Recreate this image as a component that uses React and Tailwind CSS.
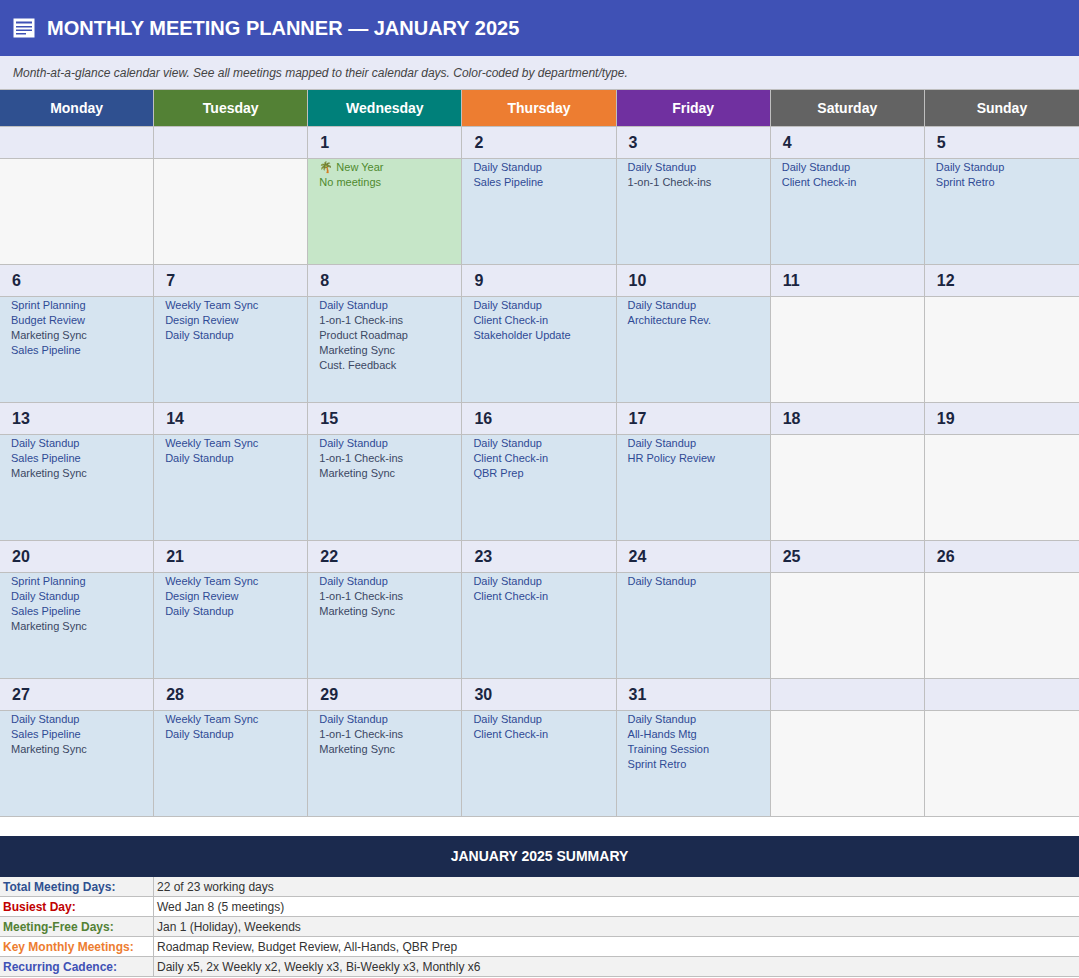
import React from "react";

const days = [
  ["Monday", "bg-[#2f5090]"],
  ["Tuesday", "bg-[#538135]"],
  ["Wednesday", "bg-[#00807a]"],
  ["Thursday", "bg-[#ed7d31]"],
  ["Friday", "bg-[#7030a0]"],
  ["Saturday", "bg-[#636363]"],
  ["Sunday", "bg-[#636363]"],
];

const gray = new Set(["1-on-1 Check-ins", "Product Roadmap", "Marketing Sync", "Cust. Feedback"]);

const M = {
  2: ["Daily Standup", "Sales Pipeline"],
  3: ["Daily Standup", "1-on-1 Check-ins"],
  4: ["Daily Standup", "Client Check-in"],
  5: ["Daily Standup", "Sprint Retro"],
  6: ["Sprint Planning", "Budget Review", "Marketing Sync", "Sales Pipeline"],
  7: ["Weekly Team Sync", "Design Review", "Daily Standup"],
  8: ["Daily Standup", "1-on-1 Check-ins", "Product Roadmap", "Marketing Sync", "Cust. Feedback"],
  9: ["Daily Standup", "Client Check-in", "Stakeholder Update"],
  10: ["Daily Standup", "Architecture Rev."],
  13: ["Daily Standup", "Sales Pipeline", "Marketing Sync"],
  14: ["Weekly Team Sync", "Daily Standup"],
  15: ["Daily Standup", "1-on-1 Check-ins", "Marketing Sync"],
  16: ["Daily Standup", "Client Check-in", "QBR Prep"],
  17: ["Daily Standup", "HR Policy Review"],
  20: ["Sprint Planning", "Daily Standup", "Sales Pipeline", "Marketing Sync"],
  21: ["Weekly Team Sync", "Design Review", "Daily Standup"],
  22: ["Daily Standup", "1-on-1 Check-ins", "Marketing Sync"],
  23: ["Daily Standup", "Client Check-in"],
  24: ["Daily Standup"],
  27: ["Daily Standup", "Sales Pipeline", "Marketing Sync"],
  28: ["Weekly Team Sync", "Daily Standup"],
  29: ["Daily Standup", "1-on-1 Check-ins", "Marketing Sync"],
  30: ["Daily Standup", "Client Check-in"],
  31: ["Daily Standup", "All-Hands Mtg", "Training Session", "Sprint Retro"],
};

const cells = [];
for (let i = 0; i < 35; i++) {
  const d = i - 1;
  cells.push(d >= 1 && d <= 31 ? d : null);
}

function Cell({ d, col }) {
  const last = col === 6;
  const br = last ? "" : "border-r";
  const items = d ? M[d] : null;
  let body = "bg-[#f7f7f7]";
  if (d === 1) body = "bg-[#c6e6c8]";
  else if (items) body = "bg-[#d6e4f0]";
  return (
    <div className="flex flex-col">
      <div className={`h-[32px] bg-[#e8eaf6] border-b border-[#bfbfbf] ${br} flex items-center px-[12px] text-[16px] font-bold text-[#1a2540]`}>
        {d || ""}
      </div>
      <div className={`h-[106px] ${body} border-b border-[#bfbfbf] ${br} px-[11px] pt-[1px] text-[11px] leading-[15px]`}>
        {d === 1 && (
          <div className="text-[#4f8a2e]">
            <div>🌴 New Year</div>
            <div>No meetings</div>
          </div>
        )}
        {items &&
          items.map((m) => (
            <div key={m} className={gray.has(m) ? "text-[#3b4763]" : "text-[#2f4a95]"}>
              {m}
            </div>
          ))}
      </div>
    </div>
  );
}

const summary = [
  ["Total Meeting Days:", "22 of 23 working days", "text-[#2f5090]", "bg-[#f2f2f2]"],
  ["Busiest Day:", "Wed Jan 8 (5 meetings)", "text-[#c00000]", "bg-white"],
  ["Meeting-Free Days:", "Jan 1 (Holiday), Weekends", "text-[#538135]", "bg-[#f2f2f2]"],
  ["Key Monthly Meetings:", "Roadmap Review, Budget Review, All-Hands, QBR Prep", "text-[#ed7d31]", "bg-white"],
  ["Recurring Cadence:", "Daily x5, 2x Weekly x2, Weekly x3, Bi-Weekly x3, Monthly x6", "text-[#3f51b5]", "bg-[#f2f2f2]"],
];

export default function App() {
  return (
    <div className="w-[1079px] h-[978px] bg-white overflow-hidden" style={{ fontFamily: '"Liberation Sans", Arial, sans-serif' }}>
      <div className="h-[56px] bg-[#3f51b5] flex items-center px-[13px] gap-[12px]">
        <svg width="22" height="20" viewBox="0 0 22 20">
          <rect x="0.5" y="0.5" width="21" height="19" fill="white" />
          <rect x="3" y="3.5" width="16" height="2" fill="#3f51b5" />
          <rect x="3" y="8" width="16" height="1.5" fill="#3f51b5" />
          <rect x="3" y="11.5" width="16" height="1.5" fill="#3f51b5" />
          <rect x="3" y="15" width="10" height="1.5" fill="#3f51b5" />
        </svg>
        <div className="text-white font-bold text-[20px]">MONTHLY MEETING PLANNER — JANUARY 2025</div>
      </div>
      <div className="h-[34px] bg-[#e8eaf6] flex items-center px-[13px] text-[12px] italic text-[#444] border-b border-[#bfbfbf]">
        Month-at-a-glance calendar view. See all meetings mapped to their calendar days. Color-coded by department/type.
      </div>
      <div className="grid grid-cols-7 w-[1079px]">
        {days.map(([n, c], i) => (
          <div key={n} className={`h-[37px] ${c} border-b border-[#bfbfbf] ${i < 6 ? "border-r" : ""} flex items-center justify-center text-white font-bold text-[14px]`}>
            {n}
          </div>
        ))}
        {cells.map((d, i) => (
          <Cell key={i} d={d} col={i % 7} />
        ))}
      </div>
      <div className="mt-[19px] h-[41px] bg-[#1b2a4e] flex items-center justify-center text-white font-bold text-[14px]">
        JANUARY 2025 SUMMARY
      </div>
      {summary.map(([k, v, kc, bg]) => (
        <div key={k} className={`flex h-[20px] ${bg} border-b border-[#bfbfbf] text-[12px]`}>
          <div className={`w-[154px] border-r border-[#bfbfbf] px-[3px] flex items-center font-bold ${kc}`}>{k}</div>
          <div className="px-[3px] flex items-center text-[#333]">{v}</div>
        </div>
      ))}
    </div>
  );
}
